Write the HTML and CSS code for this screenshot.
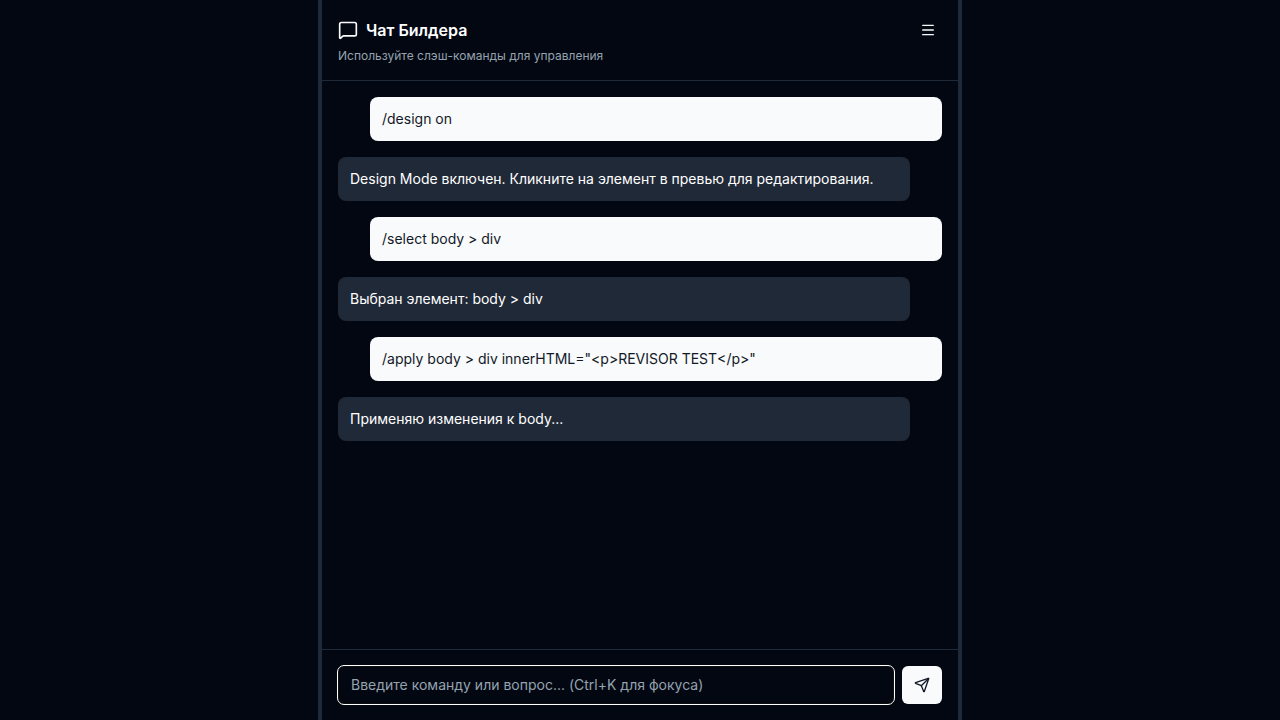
FILE: index.html
```html
<!DOCTYPE html>
<html lang="ru">
<head>
<meta charset="utf-8">
<meta name="viewport" content="width=device-width, initial-scale=1">
<title>Чат Билдера</title>
<link rel="stylesheet" href="styles.css">
</head>
<body>
<div class="workspace">
  <aside class="side"></aside>
  <div class="divider"></div>
  <main class="chat">
    <header class="chat-header">
      <div class="title-row">
        <svg class="title-icon" viewBox="0 0 24 24" fill="none" stroke="currentColor" stroke-width="2" stroke-linecap="round" stroke-linejoin="round" aria-hidden="true"><path d="M22 17a2 2 0 0 1-2 2H6.828a2 2 0 0 0-1.414.586l-2.202 2.202A.71.71 0 0 1 2 21.286V5a2 2 0 0 1 2-2h16a2 2 0 0 1 2 2z"/></svg>
        <h1 class="title">Чат Билдера</h1>
        <button class="menu-button" type="button" aria-label="Меню">
          <svg class="menu-icon" viewBox="0 0 24 24" fill="none" stroke="currentColor" stroke-width="2" stroke-linecap="round" stroke-linejoin="round" aria-hidden="true"><path d="M4 5h16"/><path d="M4 12h16"/><path d="M4 19h16"/></svg>
        </button>
      </div>
      <p class="subtitle">Используйте слэш-команды для управления</p>
    </header>
    <section class="messages">
      <p class="message message-user">/design on</p>
      <p class="message message-bot">Design Mode включен. Кликните на элемент в превью для редактирования.</p>
      <p class="message message-user">/select body &gt; div</p>
      <p class="message message-bot">Выбран элемент: body &gt; div</p>
      <p class="message message-user">/apply body &gt; div innerHTML="&lt;p&gt;REVISOR TEST&lt;/p&gt;"</p>
      <p class="message message-bot">Применяю изменения к body...</p>
    </section>
    <form class="composer">
      <input class="composer-input" type="text" aria-label="Команда или вопрос" placeholder="Введите команду или вопрос... (Ctrl+K для фокуса)">
      <button class="send-button" type="button" aria-label="Отправить">
        <svg class="send-icon" viewBox="0 0 24 24" fill="none" stroke="currentColor" stroke-width="2" stroke-linecap="round" stroke-linejoin="round" aria-hidden="true"><path d="M14.536 21.686a.5.5 0 0 0 .937-.024l6.5-19a.496.496 0 0 0-.635-.635l-19 6.5a.5.5 0 0 0-.024.937l7.93 3.18a2 2 0 0 1 1.112 1.11z"/><path d="m21.854 2.147-10.94 10.939"/></svg>
      </button>
    </form>
  </main>
  <div class="divider"></div>
  <aside class="side"></aside>
</div>
</body>
</html>
```
FILE: styles.css
```css
* { box-sizing: border-box; }

body {
  margin: 0;
  background: #030712;
  color: #f9fafb;
  font-family: Inter, "Noto Sans", sans-serif;
  font-size: 14px;
  line-height: 20px;
}

.workspace { display: flex; height: 100vh; }
.side { flex: 1; }
.divider { width: 4px; background: #1f2937; }
.chat { flex: 2; display: flex; flex-direction: column; min-width: 0; }

.chat-header {
  display: flex;
  flex-direction: column;
  gap: 4px;
  padding: 16px;
  border-bottom: 1px solid #1f2937;
}
.title-row { display: flex; align-items: center; gap: 8px; }
.title-icon { width: 20px; height: 20px; }
.title { flex: 1; margin: 0; font-size: 16px; line-height: 28px; font-weight: 600; color: #ffffff; }
.subtitle { margin: 0; font-size: 12px; line-height: 16px; color: #94a3af; }

button {
  display: flex;
  align-items: center;
  justify-content: center;
  padding: 0;
  border: 0;
  font: inherit;
}
.menu-button { width: 28px; height: 28px; background: transparent; color: inherit; }
.menu-icon { width: 16px; height: 16px; }

.messages {
  flex: 1;
  display: flex;
  flex-direction: column;
  gap: 16px;
  padding: 16px;
  overflow: auto;
}
.message { margin: 0; padding: 12px; border-radius: 8px; }
.message-user { margin-left: 32px; background: #f9fafb; color: #111827; }
.message-bot { margin-right: 32px; background: #1f2937; color: #ffffff; }

.composer { display: flex; gap: 8px; padding: 16px; border-top: 1px solid #1f2937; }
.composer-input {
  flex: 1;
  min-width: 0;
  height: 38px;
  padding: 8px 12px 10px;
  border: 1px solid #101010;
  border-radius: 6px;
  outline: 1px solid #ffffff;
  background: transparent;
  color: inherit;
  font: inherit;
}
.composer-input::placeholder { color: #94a3af; opacity: 1; }
.send-button { width: 40px; height: 38px; border-radius: 6px; background: #f9fafb; color: #111827; }
.send-icon { width: 16px; height: 16px; }
```
